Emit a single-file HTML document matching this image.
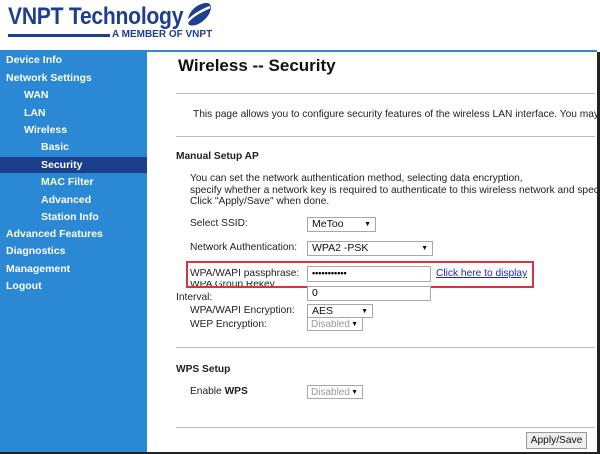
<!DOCTYPE html>
<html><head><meta charset="utf-8"><style>
*{margin:0;padding:0;box-sizing:border-box}
body{width:600px;height:454px;overflow:hidden;background:#fff;font-family:"Liberation Sans",Arial,sans-serif;position:relative}
.a{position:absolute;white-space:nowrap}
#side{position:absolute;left:0;top:52px;width:147px;height:402px;background:#2b88d4}
.n{position:absolute;color:#fff;font-weight:bold;font-size:10.5px;line-height:14px}
.hr{position:absolute;left:176px;right:2px;height:1px;background:#bbb}
.t{font-size:10.2px;color:#222}
.sel{position:absolute;border:1px solid #a8a8a8;background:#fff;font-size:10.5px;padding-left:4px;line-height:13px;color:#111}
.sel:after{content:"▼";position:absolute;right:4px;top:0;font-size:7px;color:#111}
.dis{color:#999}
.inp{position:absolute;border:1px solid #a8a8a8;background:#fff;font-size:10.5px;padding-left:4px;line-height:13px}
#clip{position:absolute;left:0;top:0;width:597px;height:452px;overflow:hidden}
</style></head><body>
<div id="clip">
<div class="a" style="left:8px;top:3px;font-size:24px;font-weight:bold;color:#1f3e90;letter-spacing:-0.3px;transform:scaleX(0.88);transform-origin:left top">VNPT Technology</div>
<svg class="a" style="left:183px;top:1px" width="30" height="28" viewBox="0 0 30 28"><path d="M6 24 C2 16 10 4 22 2 C30 1 29 10 24 16 C19 22 12 26 6 24 Z" fill="#1f3e90"/><path d="M3 22 C10 14 18 10 27 6" stroke="#fff" stroke-width="2.5" fill="none"/></svg>
<div class="a" style="left:8px;top:34px;width:102px;height:3px;background:#1f3e90"></div>
<div class="a" style="left:112px;top:29px;font-size:10px;font-weight:bold;color:#1f3e90">A MEMBER OF VNPT</div>
<div class="a" style="left:0;top:50px;width:600px;height:2px;background:#2b88d4"></div>
<div id="side"></div>
<div class="a" style="left:0;top:157px;width:147px;height:16px;background:#1b3f8b"></div>
<div class="n" style="left:6px;top:53px">Device Info</div>
<div class="n" style="left:6px;top:71px">Network Settings</div>
<div class="n" style="left:24px;top:88px">WAN</div>
<div class="n" style="left:24px;top:106px">LAN</div>
<div class="n" style="left:24px;top:123px">Wireless</div>
<div class="n" style="left:41px;top:140px">Basic</div>
<div class="n" style="left:41px;top:158px">Security</div>
<div class="n" style="left:41px;top:175px">MAC Filter</div>
<div class="n" style="left:41px;top:193px">Advanced</div>
<div class="n" style="left:41px;top:210px">Station Info</div>
<div class="n" style="left:6px;top:227px">Advanced Features</div>
<div class="n" style="left:6px;top:244px">Diagnostics</div>
<div class="n" style="left:6px;top:262px">Management</div>
<div class="n" style="left:6px;top:279px">Logout</div>

<div class="a" style="left:178px;top:56px;font-size:17px;font-weight:bold;color:#111">Wireless -- Security</div>
<div class="hr" style="top:93px"></div>
<div class="a t" style="left:193px;top:109px">This page allows you to configure security features of the wireless LAN interface. You may setup</div>
<div class="hr" style="top:136px"></div>
<div class="a t" style="left:176px;top:151px;font-weight:bold">Manual Setup AP</div>
<div class="a t" style="left:190px;top:173px;line-height:11.5px">You can set the network authentication method, selecting data encryption,<br>specify whether a network key is required to authenticate to this wireless network and specify the<br>Click "Apply/Save" when done.</div>
<div class="a t" style="left:190px;top:218px">Select SSID:</div>
<div class="sel" style="left:307px;top:217px;width:69px;height:15px">MeToo</div>
<div class="a t" style="left:190px;top:242px">Network Authentication:</div>
<div class="sel" style="left:307px;top:241px;width:126px;height:15px">WPA2 -PSK</div>
<div class="a t" style="left:190px;top:281px;height:6px;overflow:hidden;line-height:8px">WPA Group Rekey</div>
<div class="a" style="left:186px;top:261px;width:348px;height:27px;border:2px solid #d8343d"></div>
<div class="a t" style="left:190px;top:268px">WPA/WAPI passphrase:</div>
<div class="inp" style="left:307px;top:266px;width:124px;height:16px;font-size:9px;font-weight:bold">•••••••••••</div>
<div class="a" style="left:436px;top:268px;font-size:10.2px;color:#2222cc;text-decoration:underline">Click here to display</div>
<div class="a t" style="left:176px;top:292px">Interval:</div>
<div class="inp" style="left:307px;top:286px;width:124px;height:15px">0</div>
<div class="a t" style="left:190px;top:305px">WPA/WAPI Encryption:</div>
<div class="sel" style="left:307px;top:304px;width:66px;height:14px">AES</div>
<div class="a t" style="left:190px;top:319px">WEP Encryption:</div>
<div class="sel dis" style="left:307px;top:317px;width:56px;height:14px;font-size:10px;padding-left:3px">Disabled</div>
<div class="hr" style="top:347px"></div>
<div class="a t" style="left:176px;top:364px;font-weight:bold">WPS Setup</div>
<div class="a t" style="left:190px;top:386px">Enable <b>WPS</b></div>
<div class="sel dis" style="left:307px;top:385px;width:56px;height:14px;font-size:10px;padding-left:3px">Disabled</div>
<div class="hr" style="top:427px"></div>
<div class="a" style="left:526px;top:432px;width:61px;height:17px;border:1px solid #999;background:#eee;font-size:10.2px;text-align:center;line-height:15px;color:#111">Apply/Save</div>
</div>
<div class="a" style="left:597px;top:52px;width:3px;height:402px;background:#222"></div>
<div class="a" style="left:0;top:452px;width:600px;height:2px;background:#222"></div>
</body></html>
